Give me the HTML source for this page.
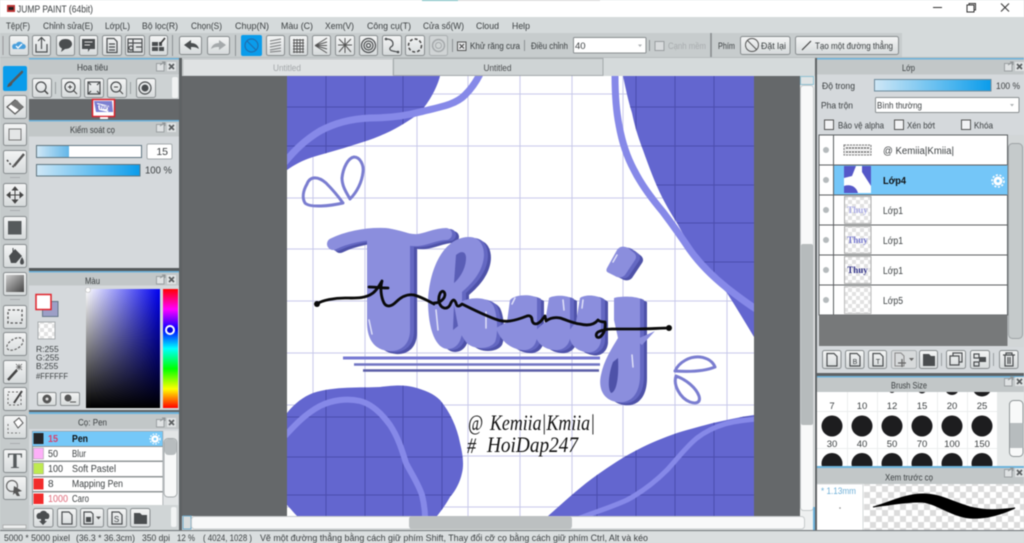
<!DOCTYPE html>
<html><head><meta charset="utf-8"><title>JUMP PAINT</title>
<style>
html,body{margin:0;padding:0;background:#d5dadb;width:1024px;height:543px;overflow:hidden}
svg{display:block;filter:blur(.45px)}
text{font-family:"Liberation Sans","Noto Sans CJK SC",sans-serif;font-size:9.5px;fill:#3c4042}
.b{fill:url(#bg);stroke:#878c8e;stroke-width:1}
.m{text-anchor:middle}
.ic{fill:none;stroke:#4a4d4f;stroke-width:1.2}
.f{fill:#4a4d4f;stroke:none}
.h{font-family:"Liberation Serif",serif;font-style:italic;font-size:22px;fill:#111}
.n{font-size:10px}
</style></head><body>
<svg width="1024" height="543" viewBox="0 0 1024 543" xmlns="http://www.w3.org/2000/svg">
<defs>
<linearGradient id="bg" x1="0" y1="0" x2="0" y2="1"><stop offset="0" stop-color="#f4f5f5"/><stop offset="1" stop-color="#d6dadb"/></linearGradient>
<linearGradient id="sl" x1="0" y1="0" x2="1" y2="0"><stop offset="0" stop-color="#cfe7f6"/><stop offset="1" stop-color="#0a9ceb"/></linearGradient>
<linearGradient id="sl2" x1="0" y1="0" x2="1" y2="0"><stop offset="0" stop-color="#cfe7f6"/><stop offset="1" stop-color="#62b6e8"/></linearGradient>
<linearGradient id="sv1" x1="0" y1="0" x2="1" y2="0"><stop offset="0" stop-color="#fff"/><stop offset="1" stop-color="#0000f0"/></linearGradient>
<linearGradient id="sv2" x1="0" y1="0" x2="0" y2="1"><stop offset="0" stop-color="#000" stop-opacity="0"/><stop offset="1" stop-color="#000"/></linearGradient>
<linearGradient id="hue" x1="0" y1="0" x2="0" y2="1"><stop offset="0" stop-color="#f00"/><stop offset=".17" stop-color="#f0f"/><stop offset=".34" stop-color="#00f"/><stop offset=".5" stop-color="#0ff"/><stop offset=".67" stop-color="#0f0"/><stop offset=".84" stop-color="#ff0"/><stop offset="1" stop-color="#f00"/></linearGradient>
<linearGradient id="gr" x1="0" y1="0" x2="1" y2="1"><stop offset="0" stop-color="#ccc"/><stop offset="1" stop-color="#444"/></linearGradient>
<pattern id="ck" width="8" height="8" patternUnits="userSpaceOnUse"><rect width="8" height="8" fill="#fff"/><rect width="4" height="4" fill="#e2e2e2"/><rect x="4" y="4" width="4" height="4" fill="#e2e2e2"/></pattern>
<pattern id="ck2" width="12" height="12" patternUnits="userSpaceOnUse"><rect width="12" height="12" fill="#fff"/><rect width="6" height="6" fill="#dcdcdc"/><rect x="6" y="6" width="6" height="6" fill="#dcdcdc"/></pattern>
<clipPath id="paper"><rect x="287" y="76" width="467" height="440"/></clipPath>
<clipPath id="bsc"><rect x="817" y="392" width="180" height="74"/></clipPath>
<clipPath id="blue"><path d="M287,76H440C437,88 428,105 417,115C400,127 385,135 363,142C345,148 330,152 313,157C303,160 294,165 287,170Z"/>
<path d="M623,76C626,90 628,100 632,113C635,127 638,137 643,150C649,167 655,183 662,197C667,207 672,215 677,223C684,236 692,249 700,262C708,272 718,283 727,293C736,307 745,322 754,337V76Z"/>
<path d="M287,413C295,403 303,397 313,393C335,386 360,388 380,387C395,385 405,385 413,387C425,390 434,394 440,400C450,412 457,427 460,443C463,455 464,465 462,473C460,482 456,490 450,497C446,504 442,510 437,516H297C293,512 290,508 287,505Z"/>
<path d="M548,516C565,501 580,487 597,475C610,466 623,457 637,450C650,443 663,438 677,433C690,429 702,426 713,423C727,420 740,417 754,415V516Z"/></clipPath>
<g id="lf">
<path stroke="none" d="M367,240L410,236V330C410,345 400,352 389,351C375,350 367,340 367,322Z"/>
<path fill="none" stroke-width="12" stroke-linecap="round" d="M333,244C345,238 365,233 385,234C398,235 405,241 418,240C428,239 435,234 446,234"/>
<path stroke="none" d="M428,300C430,265 445,238 468,237C482,236 486,250 483,262C480,275 470,285 462,292V330C462,342 456,349 448,349C436,349 428,330 428,300Z"/>
<path stroke="none" d="M460,302C470,297 487,296 493,305C498,315 498,335 495,342C490,350 472,350 466,342L458,330Z"/>
<path stroke="none" d="M510,300C515,294 532,294 537,298V335C537,346 530,351 522,350C510,349 500,340 496,328L507,322Z"/>
<path stroke="none" d="M549,298C553,295 567,295 570,298V336C570,346 562,351 554,350C544,349 537,344 534,332L545,322Z"/>
<path stroke="none" d="M580,298C585,294 598,295 601,299V340C600,350 592,354 585,352C575,350 570,344 568,332L576,322Z"/>
<path stroke="none" d="M614,298C620,296 636,296 640,299V375C640,395 630,404 617,402C603,400 598,388 601,375C604,360 612,348 618,338L614,320Z"/>
<path stroke="none" d="M607,268L617,250C620,246 624,246 628,248L633,252C636,254 637,257 635,260L625,275C622,278 618,278 615,276L609,273C606,272 606,270 607,268Z"/>
</g>
<g id="pc1"><rect x="156.500" y="63.500" width="7.500" height="7.500" fill="#dfe2e3" stroke="#9ba0a2"/><path d="M160,65L165,62M162,62H165V65" stroke="#8f9496" fill="none"/><rect x="167" y="62" width="9" height="9" fill="#dfe2e3"/><path d="M169,64L174,69M174,64L169,69" stroke="#585c5e" stroke-width="1.600"/></g>
</defs>

<!-- title bar -->
<rect width="1024" height="17" fill="#fff"/>
<rect x="422" y="0" width="36" height="1" fill="#7fc7c9"/><rect x="458" y="0" width="142" height="1" fill="#e2e2e2"/>
<path d="M7,5H15V12H7Z" fill="#b33"/><path d="M8.500,7H13.500V10H8.500Z" fill="#222"/>
<text x="17" y="12.500" style="font-size:10.500px" textLength="76" lengthAdjust="spacingAndGlyphs">JUMP PAINT (64bit)</text>
<path d="M933,7.500H942" stroke="#333" stroke-width="1"/>
<rect x="967" y="5" width="7" height="7" fill="none" stroke="#333"/><path d="M969,5V3.500H975.500V10H974" fill="none" stroke="#333"/>
<path d="M1001,3.500L1009,11.500M1009,3.500L1001,11.500" stroke="#333" stroke-width="1"/>

<!-- base -->
<rect y="17" width="1024" height="526" fill="#d5dadb"/>
<!-- menu -->
<g>
<text x="6" y="29" textLength="24" lengthAdjust="spacingAndGlyphs">Tệp(F)</text>
<text x="43" y="29" textLength="50" lengthAdjust="spacingAndGlyphs">Chỉnh sửa(E)</text>
<text x="105" y="29" textLength="25" lengthAdjust="spacingAndGlyphs">Lớp(L)</text>
<text x="142" y="29" textLength="36" lengthAdjust="spacingAndGlyphs">Bộ lọc(R)</text>
<text x="191" y="29" textLength="31" lengthAdjust="spacingAndGlyphs">Chọn(S)</text>
<text x="235" y="29" textLength="34" lengthAdjust="spacingAndGlyphs">Chụp(N)</text>
<text x="281" y="29" textLength="32" lengthAdjust="spacingAndGlyphs">Màu (C)</text>
<text x="325" y="29" textLength="29" lengthAdjust="spacingAndGlyphs">Xem(V)</text>
<text x="367" y="29" textLength="44" lengthAdjust="spacingAndGlyphs">Công cụ(T)</text>
<text x="423" y="29" textLength="41" lengthAdjust="spacingAndGlyphs">Cửa sổ(W)</text>
<text x="476" y="29" textLength="23" lengthAdjust="spacingAndGlyphs">Cloud</text>
<text x="512" y="29" textLength="18" lengthAdjust="spacingAndGlyphs">Help</text>
</g>
<!-- toolbar -->
<rect x="0" y="33" width="902" height="24" fill="#c7cccd"/>
<rect x="0" y="57" width="1024" height="1" fill="#b8bdbe"/>
<path d="M3,36V55" stroke="#999"/>
<rect class="b" x="9.500" y="35.500" width="19" height="20" rx="2"/><path d="M13,49C11,46 13,43 16,44C17,41 22,41 23,44C26,44 27,48 24,49Z" fill="#4a9fdc"/><path d="M16,46L18,48L22,44" stroke="#fff" fill="none" stroke-width="1.300"/>
<rect class="b" x="32.500" y="35.500" width="18" height="20" rx="2"/><path class="ic" d="M36,44V52H47V44M41.500,49V38M38,41L41.500,37.500L45,41"/>
<rect class="b" x="56.500" y="35.500" width="18" height="20" rx="2"/><path class="f" d="M65.500,39C70,39 72,41.500 72,44C72,47 69,49 65,49L61,52L62,48.500C60,47.500 59,46 59,44C59,41.500 61,39 65.500,39Z"/>
<rect class="b" x="79.500" y="35.500" width="18" height="20" rx="2"/><path class="f" d="M82,39H95V49H90L88,52V49H82Z"/><path d="M84.500,42H92.500M84.500,45H90" stroke="#ddd"/>
<rect class="b" x="102.500" y="35.500" width="19" height="20" rx="2"/><path class="ic" d="M107,38.500H114L117,41.500V52.500H107ZM109,44H115M109,47H115M109,50H115"/>
<rect class="b" x="125.500" y="35.500" width="19" height="20" rx="2"/><path class="ic" d="M128,39H142V52H128ZM128,43H142M133,39V52M136,47H142"/><circle cx="131" cy="48" r="2" class="ic"/>
<rect class="b" x="149.500" y="35.500" width="18" height="20" rx="2"/><path class="f" d="M152,42H158V46H152ZM159,42H162V46H159ZM152,47H158V51H152ZM159,47H164V51H159Z"/><path d="M160,44L165,38" stroke="#333" stroke-width="1.500"/>
<path d="M172.500,35V56" stroke="#8d9294"/>
<rect class="b" x="179.500" y="36.500" width="22" height="18" rx="2"/><path class="f" d="M184,45L191,40V43C195,43 198,45 199,49C196,47 194,47 191,47V50Z"/>
<rect class="b" x="207.500" y="36.500" width="22" height="18" rx="2"/><path d="M226,45L219,40V43C215,43 212,45 211,49C214,47 216,47 219,47V50Z" fill="#a5a9ab"/>
<path d="M235.500,35V56" stroke="#8d9294"/>
<rect x="241" y="35" width="21" height="21" rx="2" fill="#0a9ceb"/><circle cx="251.500" cy="45.500" r="6.500" fill="none" stroke="#2070b0" stroke-width="1.200"/><path d="M247,41L256,50" stroke="#2070b0" stroke-width="1.200"/>
<rect class="b" x="266.500" y="35.500" width="18" height="20" rx="2"/><path d="M270,41L281,39M270,44L281,42M270,47L281,45M270,50L281,48M270,52L281,51" stroke="#77797b"/>
<rect class="b" x="289.500" y="35.500" width="18" height="20" rx="2"/><path d="M293,40H304M293,43H304M293,46H304M293,49H304M293,52H304M294,39V53M297,39V53M300,39V53M303,39V53" stroke="#555" stroke-width=".9"/>
<rect class="b" x="312.500" y="35.500" width="18" height="20" rx="2"/><path d="M315,45.500L327,38M315,45.500L327,42M315,45.500H327M315,45.500L327,49M315,45.500L327,53" stroke="#555"/>
<rect class="b" x="335.500" y="35.500" width="19" height="20" rx="2"/><path d="M345,45L339,39M345,45L351,39M345,45L339,52M345,45L351,52M345,45V38M345,45V53M345,45H338M345,45H352" stroke="#555"/>
<rect class="b" x="359.500" y="35.500" width="18" height="20" rx="2"/><circle cx="368.500" cy="45.500" r="7" class="ic"/><circle cx="368.500" cy="45.500" r="4.500" class="ic"/><circle cx="368.500" cy="45.500" r="2" class="ic"/>
<rect class="b" x="382.500" y="35.500" width="19" height="20" rx="2"/><path class="ic" d="M386,39C391,39 393,41 393,44C393,47 391,46 390,48C389,51 393,51 398,52"/><circle cx="386" cy="39" r="1.300" class="f"/><circle cx="398" cy="52" r="1.300" class="f"/>
<rect class="b" x="405.500" y="35.500" width="19" height="20" rx="2"/><circle cx="415" cy="45.500" r="6.500" fill="none" stroke="#444" stroke-width="1.500" stroke-dasharray="3 2"/>
<rect x="429.500" y="35.500" width="18" height="20" rx="2" fill="#d0d4d5" stroke="#a8adaf"/><circle cx="438.500" cy="45.500" r="6" fill="none" stroke="#a5a9ab" stroke-width="1.500"/><circle cx="438.500" cy="45.500" r="3" fill="none" stroke="#a5a9ab"/>
<path d="M452.500,39V52" stroke="#8d9294"/>
<rect x="457.500" y="42" width="8.500" height="8.500" fill="#e8eaeb" stroke="#555"/><path d="M459.500,44L464,48.500M464,44L459.500,48.500" stroke="#444"/>
<text x="470" y="49" textLength="50" lengthAdjust="spacingAndGlyphs">Khử răng cưa</text>
<path d="M524.500,40V51" stroke="#8d9294"/>
<text x="531" y="49" textLength="37" lengthAdjust="spacingAndGlyphs">Điều chỉnh</text>
<rect x="573.500" y="37.500" width="72.500" height="15.500" rx="1" fill="#fff" stroke="#8a8f91"/>
<text x="575" y="49">40</text><path d="M638,44.500L642,44.500L640,47Z" fill="#b0b4b6"/>
<path d="M649.500,40V51" stroke="#8d9294"/>
<rect x="655" y="41.500" width="9" height="9" fill="#d8dbdc" stroke="#9a9ea0"/>
<text x="668" y="49" textLength="38" lengthAdjust="spacingAndGlyphs" style="fill:#a8acae">Cạnh mềm</text>
<path d="M711,33V57" stroke="#858a8c" stroke-width="1.500"/>
<text x="718" y="49" textLength="17" lengthAdjust="spacingAndGlyphs">Phím</text>
<rect class="b" x="740.500" y="36.500" width="49.500" height="18" rx="2"/><circle cx="752" cy="45" r="6.500" fill="none" stroke="#555" stroke-width="1"/><path d="M747.500,40.500L756.500,49.500" stroke="#555"/>
<text x="761" y="49" textLength="25" lengthAdjust="spacingAndGlyphs">Đặt lại</text>
<rect class="b" x="795.500" y="36.500" width="103" height="18" rx="2"/><path d="M802,50L811,41" stroke="#444" stroke-width="1.200"/>
<text x="815" y="49" textLength="78" lengthAdjust="spacingAndGlyphs">Tạo một đường thẳng</text>

<!-- left tool column -->
<rect x="0" y="58" width="29" height="472" fill="#c5cacb"/>
<rect x="3" y="66" width="24" height="25" rx="2" fill="#0a9ceb"/><path d="M9,85L13,81L22,72" stroke="#55595c" stroke-width="2.500" stroke-linecap="round"/><path d="M7,87C8,84 11,82 12,83C13,85 10,87 7,87Z" fill="#555"/>
<rect class="b" x="3.500" y="95.500" width="23" height="23" rx="2"/><path d="M15,100L23,107L15,114L7,107Z" fill="#fff" stroke="#555" stroke-width="1.200"/><path d="M10,104L17,100L23,107L19,110Z" fill="#777"/>
<rect class="b" x="3.500" y="123.500" width="23" height="22" rx="2"/><rect x="9" y="129" width="12" height="11" fill="#e4e6e7" stroke="#777"/>
<rect class="b" x="3.500" y="150.500" width="23" height="23" rx="2"/><path d="M7,160L11,165L15,168" fill="none" stroke="#444" stroke-width="1.500" stroke-dasharray="2 2"/><path d="M14,166L24,154" stroke="#555" stroke-width="2.500"/>
<path d="M10,177.500H20M10,210.500H20M10,299.500H20M10,443.500H20" stroke="#a9adaf"/>
<rect class="b" x="3.500" y="183.500" width="23" height="23" rx="2"/><path d="M15,187V203M7,195H23M15,187L12.500,190H17.500ZM15,203L12.500,200H17.500ZM7,195L10,192.500V197.500ZM23,195L20,192.500V197.500Z" stroke="#444" fill="#444"/>
<rect class="b" x="3.500" y="216.500" width="23" height="23" rx="2"/><rect x="8" y="221" width="13.500" height="13.500" fill="#565a5c"/>
<rect class="b" x="3.500" y="244.500" width="23" height="23" rx="2"/><path d="M9,256L15,249L22,256L16,263H11Z" fill="#4a4d4f"/><path d="M13,248V252M22,258C24,261 24,264 22,264C20,264 20,261 22,258Z" fill="#4a4d4f" stroke="#4a4d4f"/>
<rect class="b" x="3.500" y="272.500" width="23" height="23" rx="2"/><rect x="6" y="275" width="18" height="17" fill="url(#gr)"/>
<rect class="b" x="3.500" y="305.500" width="23" height="23" rx="2"/><rect x="8" y="310" width="14" height="13" fill="none" stroke="#555" stroke-width="1.300" stroke-dasharray="2.500 2"/>
<rect class="b" x="3.500" y="332.500" width="23" height="23" rx="2"/><ellipse cx="15" cy="344" rx="9" ry="5" transform="rotate(-30 15 344)" fill="none" stroke="#666" stroke-dasharray="2.500 1.500" stroke-width="1.200"/>
<rect class="b" x="3.500" y="360.500" width="23" height="23" rx="2"/><path d="M8,380L17,370" stroke="#444" stroke-width="2.500"/><path d="M19,364V370M16,367H22M16,364L22,370M22,364L16,370" stroke="#666" stroke-width=".8"/>
<rect class="b" x="3.500" y="387.500" width="23" height="23" rx="2"/><rect x="8" y="392" width="13" height="13" fill="none" stroke="#666" stroke-dasharray="2 2"/><path d="M14,403L22,391" stroke="#444" stroke-width="2"/>
<rect class="b" x="3.500" y="415.500" width="23" height="23" rx="2"/><path d="M14,422L19,418L23,423L18,428Z" fill="#fff" stroke="#555"/><path d="M8,424V433H20" fill="none" stroke="#777" stroke-dasharray="2 2"/>
<rect class="b" x="3.500" y="449.500" width="23" height="23" rx="2"/>
<text x="15" y="468" class="m" style="font-family:'Liberation Serif',serif;font-size:22px;font-weight:bold;fill:#555a5c">T</text>
<rect class="b" x="3.500" y="476.500" width="23" height="23" rx="2"/><circle cx="12" cy="486" r="5.500" fill="none" stroke="#666" stroke-width="1.200"/><path d="M14,486L22,491L18,492L20,496L17,496L15,493L13,495Z" fill="#555"/>
<rect x="3" y="525" width="23" height="3.500" fill="#eef0f0" stroke="#999" stroke-width=".6"/>

<!-- dark separator -->
<rect x="179" y="58" width="3" height="472" fill="#5e6264"/>
<rect x="815" y="58" width="2" height="472" fill="#5e6264"/>

<!-- Navigator -->
<rect x="29" y="58" width="150" height="472" fill="#d5d9dc"/>
<rect x="29" y="58" width="150" height="1.500" fill="#6db3dc"/>
<rect x="29" y="59.500" width="150" height="15" fill="#c2c7c8"/>
<text x="77" y="70.500" textLength="31" lengthAdjust="spacingAndGlyphs">Hoa tiêu</text>
<use href="#pc1"/>
<rect x="29" y="75" width="150" height="24" fill="#cdd2d3"/>
<rect class="b" x="32.500" y="78.500" width="19" height="19" rx="2"/><circle cx="41" cy="87" r="5" class="ic"/><path d="M44.500,90.500L48,94" stroke="#444" stroke-width="1.500"/>
<path d="M55.500,82V94M130.500,82V94" stroke="#9a9fa1"/>
<rect class="b" x="61.500" y="78.500" width="19" height="19" rx="2"/><circle cx="70" cy="87" r="5" class="ic"/><path d="M73.500,90.500L77,94M68,87H72M70,85V89" stroke="#444"/>
<rect class="b" x="84.500" y="78.500" width="19" height="19" rx="2"/><path class="ic" d="M88,82H100V94H88ZM88,82L91,85M100,82L97,85M88,94L91,91M100,94L97,91"/>
<rect class="b" x="107.500" y="78.500" width="19" height="19" rx="2"/><circle cx="116" cy="87" r="5" class="ic"/><path d="M119.500,90.500L123,94M114,87H118" stroke="#444"/>
<rect class="b" x="136.500" y="78.500" width="19" height="19" rx="2"/><circle cx="145" cy="88" r="6" class="ic"/><circle cx="145" cy="88" r="3.500" class="f"/>
<rect x="172" y="77" width="6" height="21" rx="2" fill="#f0f2f2"/>
<rect x="29" y="99" width="150" height="21" fill="#65686a"/>
<rect x="92.500" y="99.500" width="22" height="17" fill="#fff" stroke="#d8202a" stroke-width="1.500"/>
<path d="M94,101H112L113,112H96Z" fill="#7d80d0"/><path d="M97,103L110,106L108,112L99,110Z" fill="#fff"/>
<text x="103" y="109" class="m" style="font-size:6px;font-weight:bold;fill:#6568c8">Thuy</text>
<rect x="100" y="117" width="8" height="2" fill="#fff"/>
<rect x="29" y="120" width="150" height="1.500" fill="#6db3dc"/>
<rect x="29" y="121.500" width="150" height="15" fill="#c2c7c8"/>
<text x="70" y="133" textLength="45" lengthAdjust="spacingAndGlyphs">Kiểm soát cọ</text>
<use href="#pc1" y="61"/>
<rect x="36.500" y="145.500" width="105" height="12" fill="#fff" stroke="#5f7580"/><rect x="37" y="146" width="32" height="11" fill="url(#sl2)"/>
<rect x="147" y="144" width="25" height="15" rx="1.500" fill="#fff" stroke="#a5aaac"/><text x="168" y="155" style="font-size:10.500px;text-anchor:end">15</text>
<rect x="36.500" y="164.500" width="103.500" height="11.500" fill="url(#sl)" stroke="#5f7580"/>
<text x="145" y="173.500" textLength="27" lengthAdjust="spacingAndGlyphs" style="font-size:10px">100 %</text>

<!-- Mau panel -->
<rect x="29" y="268" width="150" height="3" fill="#55595b"/>
<rect x="29" y="271" width="150" height="1.500" fill="#6db3dc"/>
<rect x="29" y="272.500" width="150" height="13" fill="#c2c7c8"/>
<text x="85" y="284" textLength="15" lengthAdjust="spacingAndGlyphs">Màu</text>
<use href="#pc1" y="213"/>
<rect x="42.500" y="301.500" width="15.500" height="15" fill="#9c9fc6" stroke="#66778a"/>
<rect x="36" y="294.500" width="15" height="15" fill="#fff" stroke="#e0242c" stroke-width="1.500"/>
<rect x="38" y="322" width="17" height="17" fill="url(#ck)" stroke="#a8adaf"/>
<text x="36" y="352" style="font-size:8.500px">R:255</text>
<text x="36" y="360.500" style="font-size:8.500px">G:255</text>
<text x="36" y="369" style="font-size:8.500px">B:255</text>
<text x="36" y="379" style="font-size:8.500px" textLength="32" lengthAdjust="spacingAndGlyphs">#FFFFFF</text>
<rect class="b" x="37.500" y="392.500" width="18.500" height="13" rx="1.500"/><circle cx="47" cy="399" r="4.500" fill="#555"/><circle cx="47" cy="399" r="1.500" fill="#ddd"/>
<rect class="b" x="60.500" y="392.500" width="19" height="13" rx="1.500"/><circle cx="68" cy="398" r="3.500" fill="#555"/><path d="M70,402H76" stroke="#555"/>
<rect x="86" y="289" width="74" height="119" fill="url(#sv1)"/><rect x="86" y="289" width="74" height="119" fill="url(#sv2)"/>
<circle cx="88" cy="290" r="2.500" fill="#fff" stroke="#bbb" stroke-width=".6"/>
<rect x="163" y="289" width="15" height="119" fill="url(#hue)"/>
<circle cx="170" cy="330" r="4" fill="#0000e0" stroke="#fff" stroke-width="2"/>

<!-- Brush panel -->
<rect x="29" y="410" width="150" height="2" fill="#5e6264"/>
<rect x="29" y="412" width="150" height="2" fill="#6db3dc"/>
<rect x="29" y="414" width="150" height="15" fill="#c2c7c8"/>
<text x="78" y="425.500" textLength="29" lengthAdjust="spacingAndGlyphs">Cọ: Pen</text>
<use href="#pc1" y="356"/>
<rect x="32" y="431" width="131" height="74" fill="#8f9496"/>
<rect x="32.500" y="431.500" width="130" height="14.500" fill="#75c8f8"/>
<rect x="33" y="447" width="129.500" height="13.500" fill="#fff"/>
<rect x="33" y="462" width="129.500" height="14" fill="#fff"/>
<rect x="33" y="477.500" width="129.500" height="13.500" fill="#fff"/>
<rect x="33" y="492.500" width="129.500" height="12.500" fill="#fff"/>
<rect x="33.500" y="433" width="10" height="11" fill="#252729"/>
<rect x="33.500" y="448" width="10" height="11" fill="#fdb0f8" stroke="#999" stroke-width=".5"/>
<rect x="33.500" y="463" width="10" height="11" fill="#bfea50" stroke="#999" stroke-width=".5"/>
<rect x="33.500" y="478.500" width="10" height="11" fill="#f22b2b"/>
<rect x="33.500" y="493.500" width="10" height="10.500" fill="#f22b2b"/>
<text x="48" y="442" class="n" style="fill:#d9406a;font-weight:bold" textLength="10" lengthAdjust="spacingAndGlyphs">15</text>
<text x="72" y="442" class="n" style="font-weight:bold;fill:#111" textLength="16" lengthAdjust="spacingAndGlyphs">Pen</text>
<text x="48" y="457" class="n" textLength="10" lengthAdjust="spacingAndGlyphs">50</text><text x="72" y="457" class="n" textLength="14" lengthAdjust="spacingAndGlyphs">Blur</text>
<text x="48" y="472" class="n" textLength="15" lengthAdjust="spacingAndGlyphs">100</text><text x="72" y="472" class="n" textLength="44" lengthAdjust="spacingAndGlyphs">Soft Pastel</text>
<text x="48" y="487" class="n">8</text><text x="72" y="487" class="n" textLength="51" lengthAdjust="spacingAndGlyphs">Mapping Pen</text>
<text x="48" y="502" class="n" style="fill:#e06a7a" textLength="20" lengthAdjust="spacingAndGlyphs">1000</text><text x="72" y="502" class="n" textLength="17" lengthAdjust="spacingAndGlyphs">Caro</text>
<circle cx="155" cy="439" r="3.800" fill="#fff"/><circle cx="155" cy="439" r="1.300" fill="#75c8f8"/><circle cx="155" cy="439" r="5" fill="none" stroke="#fff" stroke-width="1.200" stroke-dasharray="1.500 1.500"/>
<rect x="164" y="431" width="14" height="74" fill="#e2e5e6"/>
<rect x="164" y="438.500" width="13" height="58.500" rx="4" fill="#f8f9f9" stroke="#a3a8aa"/>
<rect x="164.500" y="439" width="12" height="16" rx="4" fill="#b7bcbe"/>
<rect x="29" y="505" width="150" height="25" fill="#d0d5d6"/>
<rect class="b" x="33.500" y="508.500" width="19.500" height="18.500" rx="2"/><path class="f" d="M38,519C35,517 37,512 40,513C41,510 46,510 47,513C50,513 50,518 48,519ZM41,519H45V521H47L43,525L39,521H41Z"/>
<rect class="b" x="57.500" y="508.500" width="19" height="18.500" rx="2"/><path class="ic" d="M62,512H69L72,515V524H62Z"/>
<rect class="b" x="80.500" y="508.500" width="23" height="18.500" rx="2"/><path class="ic" d="M84,512H91L93,514V524H84Z"/><rect x="86" y="517" width="5" height="5" class="f"/><path d="M96,516.500H101L98.500,519.500Z" fill="#555"/>
<rect class="b" x="107.500" y="508.500" width="19" height="18.500" rx="2"/><path class="ic" d="M112,512H119L122,515V524H112Z"/><text x="116.500" y="522" class="m" style="font-size:8px">S</text>
<rect class="b" x="130.500" y="508.500" width="19.500" height="18.500" rx="2"/><path class="f" d="M134,513H140L142,515H147V524H134Z"/>
<rect x="171" y="507" width="5.500" height="20" rx="2" fill="#f2f4f4"/>

<!-- tabs -->
<rect x="182" y="58" width="618" height="18" fill="#d5dadb"/>
<rect x="183" y="59" width="210" height="17" fill="#dfe2e3" stroke="#c1c5c6"/>
<text x="273" y="71" style="fill:#a3a7a9" textLength="28" lengthAdjust="spacingAndGlyphs">Untitled</text>
<rect x="393.500" y="58.500" width="209.500" height="17" fill="#cfd4d5" stroke="#a5aaac"/>
<text x="483.500" y="71" style="fill:#4a4d4f" textLength="28" lengthAdjust="spacingAndGlyphs">Untitled</text>

<!-- canvas -->
<rect x="182" y="76" width="618" height="440" fill="#65686a"/>
<rect x="287" y="76" width="467" height="440" fill="#fff"/>
<g clip-path="url(#paper)">
 <path d="M313,76V516M365,76V516M417,76V516M468,76V516M520,76V516M572,76V516M623,76V516M675,76V516M727,76V516M287,94H754M287,146H754M287,198H754M287,249H754M287,301H754M287,353H754M287,405H754M287,456H754M287,507H754" stroke="#c8c9ea" stroke-width="1"/>
 <path fill="#6366cf" d="M287,76H440C437,88 428,105 417,115C400,127 385,135 363,142C345,148 330,152 313,157C303,160 294,165 287,170Z"/>
 <path fill="#6366cf" d="M623,76C626,90 628,100 632,113C635,127 638,137 643,150C649,167 655,183 662,197C667,207 672,215 677,223C684,236 692,249 700,262C708,272 718,283 727,293C736,307 745,322 754,337V76Z"/>
 <path fill="#6366cf" d="M287,413C295,403 303,397 313,393C335,386 360,388 380,387C395,385 405,385 413,387C425,390 434,394 440,400C450,412 457,427 460,443C463,455 464,465 462,473C460,482 456,490 450,497C446,504 442,510 437,516H297C293,512 290,508 287,505Z"/>
 <path fill="#6366cf" d="M548,516C565,501 580,487 597,475C610,466 623,457 637,450C650,443 663,438 677,433C690,429 702,426 713,423C727,420 740,417 754,415V516Z"/>
 <g clip-path="url(#blue)"><path d="M326,76V516M365,76V516M403,76V516M442,76V516M597,76V516M636,76V516M675,76V516M714,76V516M287,107H754M287,146H754M287,185H754M287,223H754M287,262H754M287,417H754M287,457H754M287,495H754" stroke="#4b4eae" stroke-width="1"/></g>
 <g fill="none" stroke="#8689e8" stroke-linecap="round">
 <path stroke-width="7" d="M285,162C295,150 305,140 320,131C335,123 350,119 370,118C390,118 405,116 420,112C440,107 455,105 465,95C472,88 476,82 480,74"/>
 <path stroke-width="7" d="M615,74C615,95 616,110 619,125C622,142 627,157 634,170C642,186 652,199 663,212C672,224 680,235 690,250C700,264 712,276 727,288C736,295 745,302 756,309"/>
 <path stroke-width="6" d="M284,437C294,426 305,414 320,406C332,400 347,398 360,401C372,404 382,414 390,425C398,437 402,450 406,463C411,473 418,483 422,495C424,503 425,510 425,518"/>
 <path stroke-width="5" d="M580,518C595,512 612,507 627,500C642,492 655,482 667,470C678,458 686,447 697,438C706,431 715,427 725,424C735,421 745,420 756,419"/>
 </g>
 <g fill="none" stroke="#7a7dd0" stroke-width="3" stroke-linejoin="round">
 <path d="M343,203C338,196 331,188 326,183C318,176 310,176 307,184C303,191 302,198 305,203C310,208 330,206 343,203Z"/>
 <path d="M350,199C346,192 342,186 342,178C343,168 348,158 354,157C360,157 364,165 363,172C362,182 357,192 350,199Z"/>
 <path d="M675,371C679,362 690,356 700,357C708,358 713,362 715,367C705,371 690,372 675,371Z"/>
 <path d="M676,376C673,385 680,398 690,402C696,404 701,403 699,396C696,388 687,380 676,376Z"/>
 </g>
 <path d="M343,358H600" stroke="#7679d2" stroke-width="3"/>
 <path d="M354,364.500H600" stroke="#7074c2" stroke-width="2.500"/>
 <path d="M363,370.500H599" stroke="#5a5da6" stroke-width="2.500"/>
 <use href="#lf" transform="translate(7,3)" fill="#4e52a8" stroke="#4e52a8"/>
 <use href="#lf" transform="translate(4,1)" fill="#6468c2" stroke="#6468c2"/>
 <use href="#lf" fill="#8b8edd" stroke="#8b8edd"/>
 <path d="M456,255C462,250 466,252 466,258C466,268 460,278 454,283Z" fill="#5a5eb6"/>
 <path d="M454,305L458,326L453,330Z" fill="#5a5eb6"/>
 <path d="M613,362C609,372 607,388 611,393C617,392 619,375 618,358Z" fill="#4e52a8"/>
 <path d="M635,340L655,331L642,345Z" fill="#8b8edd"/>
 <g stroke="#dfe0f8" stroke-width="1.500" stroke-linecap="round" fill="none">
  <path d="M369,320L372,334M436,310L438,330M512,304L515,298M563,300L564,310M583,300L582,308M486,312L486,328M632,355L633,367M613,262L617,255"/>
 </g>
 <path fill="none" stroke="#0a0a0a" stroke-width="2.800" stroke-linecap="round" stroke-linejoin="round" d="M317,304C322,300 335,298 345,298C355,298 365,299 373,293C378,289 380,284 382,281C380,288 381,297 384,303C387,308 392,306 396,302C402,296 408,294 414,295C422,297 428,301 434,304M369,287C375,287 382,288 388,288M434,303C442,303 447,296 444,292C441,289 438,296 439,302C441,309 447,310 450,305C452,300 454,298 456,303C457,308 460,306 462,304C470,308 480,313 490,317C497,320 502,322 510,321C517,320 522,318 527,316C530,315 532,317 532,320C533,325 537,325 541,321L545,316L546,321C550,318 555,317 560,318C567,320 572,323 580,324C588,326 594,325 598,320C600,322 603,322 605,322C606,328 604,334 600,337C596,339 595,334 598,332C602,330 606,329 612,329H637C650,329 660,328 669,328"/>
 <circle cx="317" cy="304" r="3" fill="#0a0a0a"/><circle cx="669" cy="328" r="3" fill="#0a0a0a"/>
 <text x="468" y="430" class="h" textLength="15" lengthAdjust="spacingAndGlyphs">@</text>
 <text x="490" y="430" class="h" textLength="105" lengthAdjust="spacingAndGlyphs">Kemiia|Kmiia|</text>
 <text x="467" y="453" class="h" textLength="9" lengthAdjust="spacingAndGlyphs">#</text>
 <text x="487" y="452" class="h" textLength="91" lengthAdjust="spacingAndGlyphs">HoiDap247</text>
</g>

<!-- vertical scrollbar -->
<rect x="800" y="76" width="15" height="440" fill="#eef0f0"/>
<rect x="800.500" y="76.500" width="13" height="8" fill="#dfe3e4" stroke="#8fc0d2"/>
<rect x="800.500" y="85.500" width="13" height="425" rx="3" fill="#f8f9f9" stroke="#c6cacb"/>
<rect x="801" y="244" width="12" height="181" rx="2" fill="#b6bbbc"/>
<!-- horizontal scrollbar -->
<rect x="182" y="516" width="633" height="14" fill="#eef0f0"/>
<rect x="183" y="516" width="8" height="13" fill="#d7dbdc" stroke="#6fa9c8"/>
<rect x="191.500" y="516.500" width="613" height="12.500" rx="3" fill="#f8f9f9" stroke="#c6cacb"/>
<rect x="409" y="516" width="163" height="13" rx="3" fill="#bcc0c1"/>

<!-- Right panel: layer -->
<rect x="817" y="58" width="207" height="317" fill="#d5d9dc"/>
<rect x="817" y="58" width="207" height="1.500" fill="#6db3dc"/>
<rect x="817" y="59.500" width="207" height="15" fill="#c2c7c8"/>
<text x="902" y="71" textLength="13" lengthAdjust="spacingAndGlyphs">Lớp</text>
<use href="#pc1" x="848"/>
<text x="822" y="89" textLength="33" lengthAdjust="spacingAndGlyphs">Độ trong</text>
<rect x="874.500" y="79.500" width="116.500" height="11.500" fill="url(#sl)" stroke="#6f8c9c"/>
<text x="996" y="89" textLength="24" lengthAdjust="spacingAndGlyphs">100 %</text>
<text x="821" y="108.500" textLength="32" lengthAdjust="spacingAndGlyphs">Pha trộn</text>
<rect x="875.500" y="97.500" width="143.500" height="15" rx="1" fill="#fff" stroke="#8a8f91"/>
<text x="877" y="108.500" textLength="45" lengthAdjust="spacingAndGlyphs">Bình thường</text>
<path d="M1010,104H1014L1012,106.500Z" fill="#b0b4b6"/>
<rect x="824.500" y="120" width="9" height="9.500" fill="#f2f3f4" stroke="#555"/><text x="838" y="128.500" textLength="46" lengthAdjust="spacingAndGlyphs">Bảo vệ alpha</text>
<rect x="894.500" y="120" width="9" height="9.500" fill="#f2f3f4" stroke="#555"/><text x="907" y="128.500" textLength="28" lengthAdjust="spacingAndGlyphs">Xén bớt</text>
<rect x="961.500" y="120" width="9" height="9.500" fill="#f2f3f4" stroke="#555"/><text x="974" y="128.500" textLength="19" lengthAdjust="spacingAndGlyphs">Khóa</text>
<rect x="819" y="135" width="188.500" height="180" fill="#fff" stroke="#5a5e60"/>
<rect x="833" y="165" width="174.500" height="30" fill="#74c6f8"/>
<path d="M819,165H1007M819,195H1007M819,225H1007M819,255H1007M819,285H1007" stroke="#5a5e60"/>
<path d="M833.500,135V315" stroke="#5a5e60"/>
<g fill="#b5babc"><circle cx="826" cy="150" r="3"/><circle cx="826" cy="180" r="3"/><circle cx="826" cy="210" r="3"/><circle cx="826" cy="240" r="3"/><circle cx="826" cy="270" r="3"/><circle cx="826" cy="300" r="3"/></g>
<rect x="844" y="145" width="27" height="10" fill="#eee" stroke="#777" stroke-dasharray="2 1"/><path d="M846,148H869M846,152H869" stroke="#444" stroke-dasharray="2 1"/>
<rect x="844" y="166" width="27" height="27" fill="#fff"/><path d="M844,166H856L852,176L844,178ZM862,166H871V186L862,172ZM844,186C850,184 856,186 858,193H844Z" fill="#5558c8"/>
<rect x="844.500" y="196.500" width="26.500" height="27" fill="url(#ck)" stroke="#aaa"/>
<text x="857.500" y="213" class="m" style="font-size:9px;font-weight:bold;font-family:'Liberation Serif',serif;fill:#a9abe6">Thuy</text>
<rect x="844.500" y="226.500" width="26.500" height="27" fill="url(#ck)" stroke="#aaa"/>
<text x="857.500" y="243" class="m" style="font-size:9px;font-weight:bold;font-family:'Liberation Serif',serif;fill:#7578d0">Thuy</text>
<rect x="844.500" y="256.500" width="26.500" height="27" fill="url(#ck)" stroke="#aaa"/>
<text x="857.500" y="273" class="m" style="font-size:9px;font-weight:bold;font-family:'Liberation Serif',serif;fill:#2e3088">Thuy</text>
<rect x="844.500" y="286.500" width="26.500" height="27" fill="url(#ck)" stroke="#bbb"/>
<text x="883" y="154" class="n" textLength="71" lengthAdjust="spacingAndGlyphs">@ Kemiia|Kmiia|</text>
<text x="883" y="184" class="n" style="font-weight:bold;fill:#111" textLength="23" lengthAdjust="spacingAndGlyphs">Lớp4</text>
<text x="883" y="214" class="n" textLength="20" lengthAdjust="spacingAndGlyphs">Lớp1</text>
<text x="883" y="244" class="n" textLength="20" lengthAdjust="spacingAndGlyphs">Lớp1</text>
<text x="883" y="274" class="n" textLength="20" lengthAdjust="spacingAndGlyphs">Lớp1</text>
<text x="883" y="304" class="n" textLength="20" lengthAdjust="spacingAndGlyphs">Lớp5</text>
<circle cx="998" cy="181" r="4.500" fill="#fff"/><circle cx="998" cy="181" r="1.500" fill="#74c6f8"/><circle cx="998" cy="181" r="6" fill="none" stroke="#fff" stroke-width="1.500" stroke-dasharray="2 1.700"/>
<rect x="819" y="315" width="188.500" height="31" fill="#77797a"/>
<rect x="1008" y="135" width="16" height="212" fill="#d2d6d7"/>
<rect x="1008.500" y="143.500" width="14" height="195" rx="4" fill="#c5cacb" stroke="#9ea3a5"/>
<g>
<rect class="b" x="822.500" y="350.500" width="18.500" height="18" rx="2"/><path class="ic" d="M827,353.500H834L837,356.500V366H827Z"/>
<rect class="b" x="845.500" y="350.500" width="18.500" height="18" rx="2"/><path class="ic" d="M850,353.500H857L860,356.500V366H850Z"/><text x="855" y="364" class="m" style="font-size:7px">B</text>
<rect class="b" x="868.500" y="350.500" width="18" height="18" rx="2"/><path class="ic" d="M873,353.500H880L883,356.500V366H873Z"/><text x="878" y="364" class="m" style="font-size:7px">T</text>
<rect x="891.500" y="350.500" width="25" height="18" rx="2" fill="#d7dadb" stroke="#a8adaf"/><path d="M895,353H901L904,356V366H895Z" fill="none" stroke="#888"/><path d="M898,363H906M902,359V367" stroke="#666" stroke-width="1.300"/><path d="M909,358H914L911.500,361Z" fill="#666"/>
<rect class="b" x="919.500" y="350.500" width="18" height="18" rx="2"/><path class="f" d="M923,354H929L931,356H935V366H923Z"/>
<path d="M941.500,353V366M993.500,353V366" stroke="#9a9fa1"/>
<rect class="b" x="946.500" y="350.500" width="19" height="18" rx="2"/><path class="ic" d="M950,356H959V365H950ZM953,356V353H962V362H959"/>
<rect class="b" x="970.500" y="350.500" width="19" height="18" rx="2"/><path class="f" d="M979,357H986V362H979Z"/><path class="ic" d="M974,354H979V358H974ZM974,362H979V366H974Z"/>
<rect class="b" x="999.500" y="350.500" width="18.500" height="18" rx="2"/><path class="ic" d="M1003,355H1015M1006,355V353H1012V355M1005,355V366H1013V355M1008,357V364M1010,357V364"/>
</g>

<!-- Brush size -->
<rect x="817" y="373" width="207" height="3" fill="#5e6264"/>
<rect x="817" y="376" width="207" height="1.500" fill="#6db3dc"/>
<rect x="817" y="377.500" width="207" height="14.500" fill="#c2c7c8"/>
<text x="891" y="388.500" textLength="36" lengthAdjust="spacingAndGlyphs">Brush Size</text>
<use href="#pc1" x="848" y="315"/>
<rect x="817" y="392" width="180" height="74" fill="#fff"/>
<path d="M847.500,392V466M877.500,392V466M907.500,392V466M937.500,392V466M967.500,392V466M817,411.500H997M817,448.500H997" stroke="#eceeee"/>
<g fill="#1d1d1f" clip-path="url(#bsc)">
<circle cx="892" cy="390" r="3"/><circle cx="922" cy="389" r="4.500"/><circle cx="952" cy="388" r="7"/><circle cx="982" cy="387" r="9.500"/>
<circle cx="832" cy="426" r="10.500"/><circle cx="862" cy="426" r="10.500"/><circle cx="892" cy="426" r="10.500"/><circle cx="922" cy="426" r="10.500"/><circle cx="952" cy="426" r="10.500"/><circle cx="982" cy="426" r="10.500"/>
<circle cx="832" cy="463.500" r="10.500"/><circle cx="862" cy="463.500" r="10.500"/><circle cx="892" cy="463.500" r="10.500"/><circle cx="922" cy="463.500" r="10.500"/><circle cx="952" cy="463.500" r="10.500"/><circle cx="982" cy="463.500" r="10.500"/>
</g>
<g style="font-size:9px">
<text class="m" x="832" y="409">7</text><text class="m" x="862" y="409">10</text><text class="m" x="892" y="409">12</text><text class="m" x="922" y="409">15</text><text class="m" x="952" y="409">20</text><text class="m" x="982" y="409">25</text>
<text class="m" x="832" y="447">30</text><text class="m" x="862" y="447">40</text><text class="m" x="892" y="447">50</text><text class="m" x="922" y="447">70</text><text class="m" x="952" y="447">100</text><text class="m" x="982" y="447">150</text>
</g>
<rect x="997" y="392" width="27" height="74" fill="#e6e9e9"/>
<rect x="1009.500" y="400.500" width="13.500" height="56" rx="4" fill="#f8f9f9" stroke="#8f9496"/>
<rect x="1010" y="423" width="13" height="25" fill="#b7bcbe"/>

<!-- preview -->
<rect x="817" y="466" width="207" height="2" fill="#6db3dc"/>
<rect x="817" y="468" width="207" height="16" fill="#c2c7c8"/>
<text x="885" y="480.500" textLength="48" lengthAdjust="spacingAndGlyphs">Xem trước cọ</text>
<use href="#pc1" x="848" y="406"/>
<rect x="817" y="484" width="207" height="46" fill="#fff"/>
<rect x="864" y="484" width="160" height="46" fill="url(#ck2)"/>
<path d="M817,484H863V530" fill="none" stroke="#d6d9da"/>
<text x="821" y="494" style="fill:#6fb0d8;font-size:9.500px" textLength="35" lengthAdjust="spacingAndGlyphs">* 1.13mm</text>
<circle cx="840" cy="508" r=".8" fill="#888"/>
<path d="M873,507C888,503 905,494 923,494C940,494 950,501 970,507C985,511 1000,510 1015,508C1000,515 985,519 970,518C950,516 935,502 920,502C905,502 888,505 873,507Z" fill="#000" stroke="#000" stroke-width="1"/>
<rect x="813" y="507" width="2" height="23" fill="#6db3dc"/>

<!-- status bar -->
<rect y="530" width="1024" height="1.200" fill="#72777a"/>
<rect y="531.200" width="1024" height="11.800" fill="#dadedf"/>
<g>
<text x="4" y="541" textLength="66" lengthAdjust="spacingAndGlyphs">5000 * 5000 pixel</text>
<text x="76" y="541" textLength="59" lengthAdjust="spacingAndGlyphs">(36.3 * 36.3cm)</text>
<text x="142" y="541" textLength="28" lengthAdjust="spacingAndGlyphs">350 dpi</text>
<text x="177" y="541" textLength="18" lengthAdjust="spacingAndGlyphs">12 %</text>
<text x="203" y="541" textLength="49" lengthAdjust="spacingAndGlyphs">( 4024, 1028 )</text>
<text x="260" y="541" textLength="388" lengthAdjust="spacingAndGlyphs">Vẽ một đường thẳng bằng cách giữ phím Shift, Thay đổi cỡ cọ bằng cách giữ phím Ctrl, Alt và kéo</text>
</g>
</svg>
</body></html>
